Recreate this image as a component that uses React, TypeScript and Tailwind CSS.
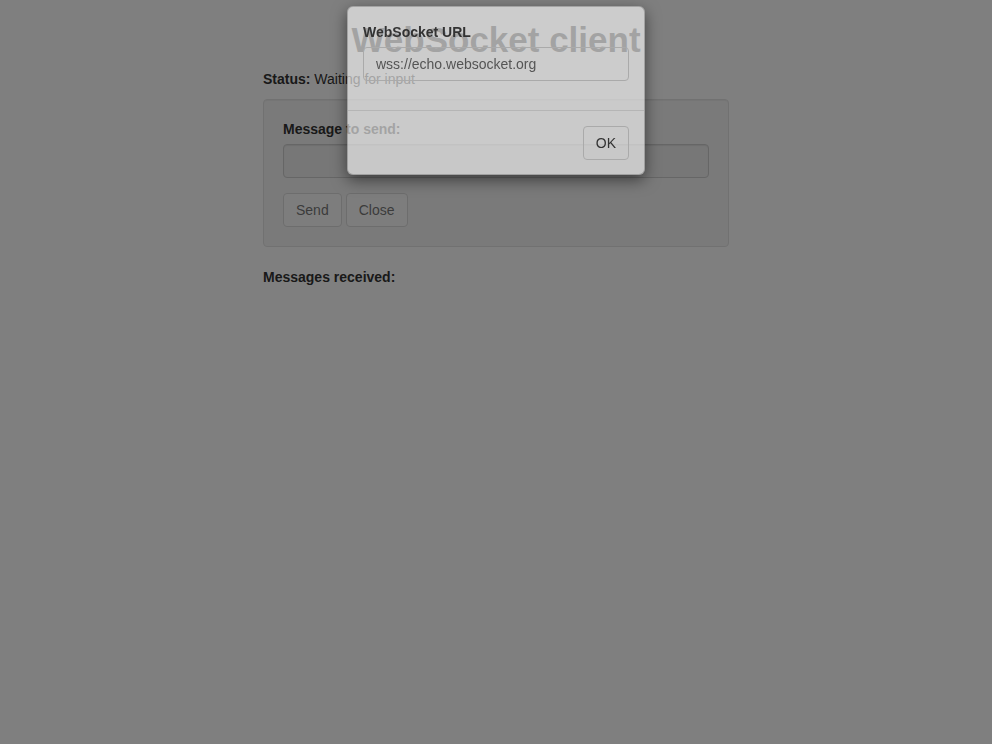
import React from "react";

const font = { fontFamily: '"Liberation Sans", Arial, Helvetica, sans-serif' };

export default function App() {
  return (
    <div className="relative min-h-[744px] bg-white text-[14px] leading-[20px] text-[#333]" style={font}>
      <div className="mx-auto w-[466px]">
        <h1 className="mt-5 mb-[10px] text-center text-[35px] leading-[39px] font-bold">WebSocket client</h1>
        <p className="mb-[10px]">
          <strong>Status:</strong> Waiting for input
        </p>

        <div className="mb-5 rounded border border-[#e3e3e3] bg-[#f5f5f5] p-[19px] shadow-[inset_0_1px_1px_rgba(0,0,0,0.05)]">
          <div className="mb-[15px]">
            <label className="mb-[5px] block font-bold">Message to send:</label>
            <input
              disabled
              className="block h-[34px] w-full rounded border border-[#ccc] bg-[#eee] px-3 shadow-[inset_0_1px_1px_rgba(0,0,0,0.075)]"
            />
          </div>
          <div className="flex gap-1">
            <button disabled className="h-[34px] rounded border border-[#ccc] bg-white px-3 text-[#333] opacity-65">
              Send
            </button>
            <button disabled className="h-[34px] rounded border border-[#ccc] bg-white px-3 text-[#333] opacity-65">
              Close
            </button>
          </div>
        </div>

        <p className="font-bold">Messages received:</p>
      </div>

      {/* backdrop */}
      <div className="fixed inset-0 bg-black/50" />

      {/* dialog, caught mid fade-in */}
      <div className="fixed top-[6px] left-1/2 w-[298px] -translate-x-1/2 rounded-md border border-black/20 bg-white/60 shadow-[0_5px_15px_rgba(0,0,0,0.5)]">
        <div className="px-[15px] pt-[15px] pb-[15px]">
          <label className="mb-[5px] block font-bold text-[#333]">WebSocket URL</label>
          <input
            readOnly
            value="wss://echo.websocket.org"
            className="block h-[34px] w-full rounded border border-[#aaa] bg-transparent px-3 text-[#555] outline-none"
            style={font}
          />
          <div className="h-[14px]" />
        </div>
        <div className="flex justify-end border-t border-[#b5b5b5] px-[15px] pt-[15px] pb-[14px]">
          <button className="h-[34px] rounded border border-[#aaa] bg-transparent px-3 text-[#333]">OK</button>
        </div>
      </div>
    </div>
  );
}
